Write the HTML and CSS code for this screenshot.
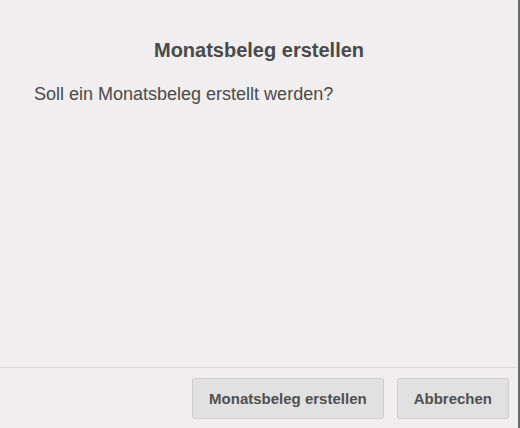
FILE: index.html
```html
<!DOCTYPE html>
<html lang="de">
<head>
    <meta charset="UTF-8">
    <meta name="viewport" content="width=device-width, initial-scale=1.0">
    <title>Monatsbeleg erstellen</title>
    <link rel="stylesheet" href="styles.css">
</head>
<body>
    <div class="dialog">
        <div class="dialog-content">
            <h1 class="dialog-title">Monatsbeleg erstellen</h1>
            <p class="dialog-text">Soll ein Monatsbeleg erstellt werden?</p>
        </div>

        <div class="dialog-footer">
            <button class="btn">Monatsbeleg erstellen</button>
            <button class="btn">Abbrechen</button>
        </div>
    </div>
</body>
</html>
```

FILE: styles.css
```css
/* Base */
html, body {
    margin: 0;
    padding: 0;
    height: 100%;
}

body {
    font-family: 'Liberation Sans', Arial, sans-serif;
    background-color: #f0eeee;
    color: #4a4a4a;
}

/* Dialog */
.dialog {
    display: flex;
    flex-direction: column;
    height: 428px;
    box-sizing: border-box;
    border-right: 2px solid #6b6b6b;
    background-color: #f0eeee;
}

.dialog-content {
    flex: 1;
    padding: 38px 34px 0 34px;
}

.dialog-title {
    margin: 0;
    font-size: 20px;
    line-height: 24px;
    font-weight: bold;
    text-align: center;
    color: #4a4a4a;
}

.dialog-text {
    margin: 21px 0 0 0;
    font-size: 18px;
    line-height: 22px;
    color: #4a4a4a;
}

/* Footer with buttons */
.dialog-footer {
    display: flex;
    justify-content: flex-end;
    gap: 13px;
    padding: 10px 9px 9px 0;
    border-top: 1px solid #d9d7d7;
}

.btn {
    height: 41px;
    padding: 0 16px;
    font-family: 'Liberation Sans', Arial, sans-serif;
    font-size: 15px;
    font-weight: bold;
    color: #505050;
    background-color: #e2e1e1;
    border: 1px solid #cfcdcd;
    border-radius: 2px;
    cursor: pointer;
}

.btn:hover {
    background-color: #d8d7d7;
}
```
